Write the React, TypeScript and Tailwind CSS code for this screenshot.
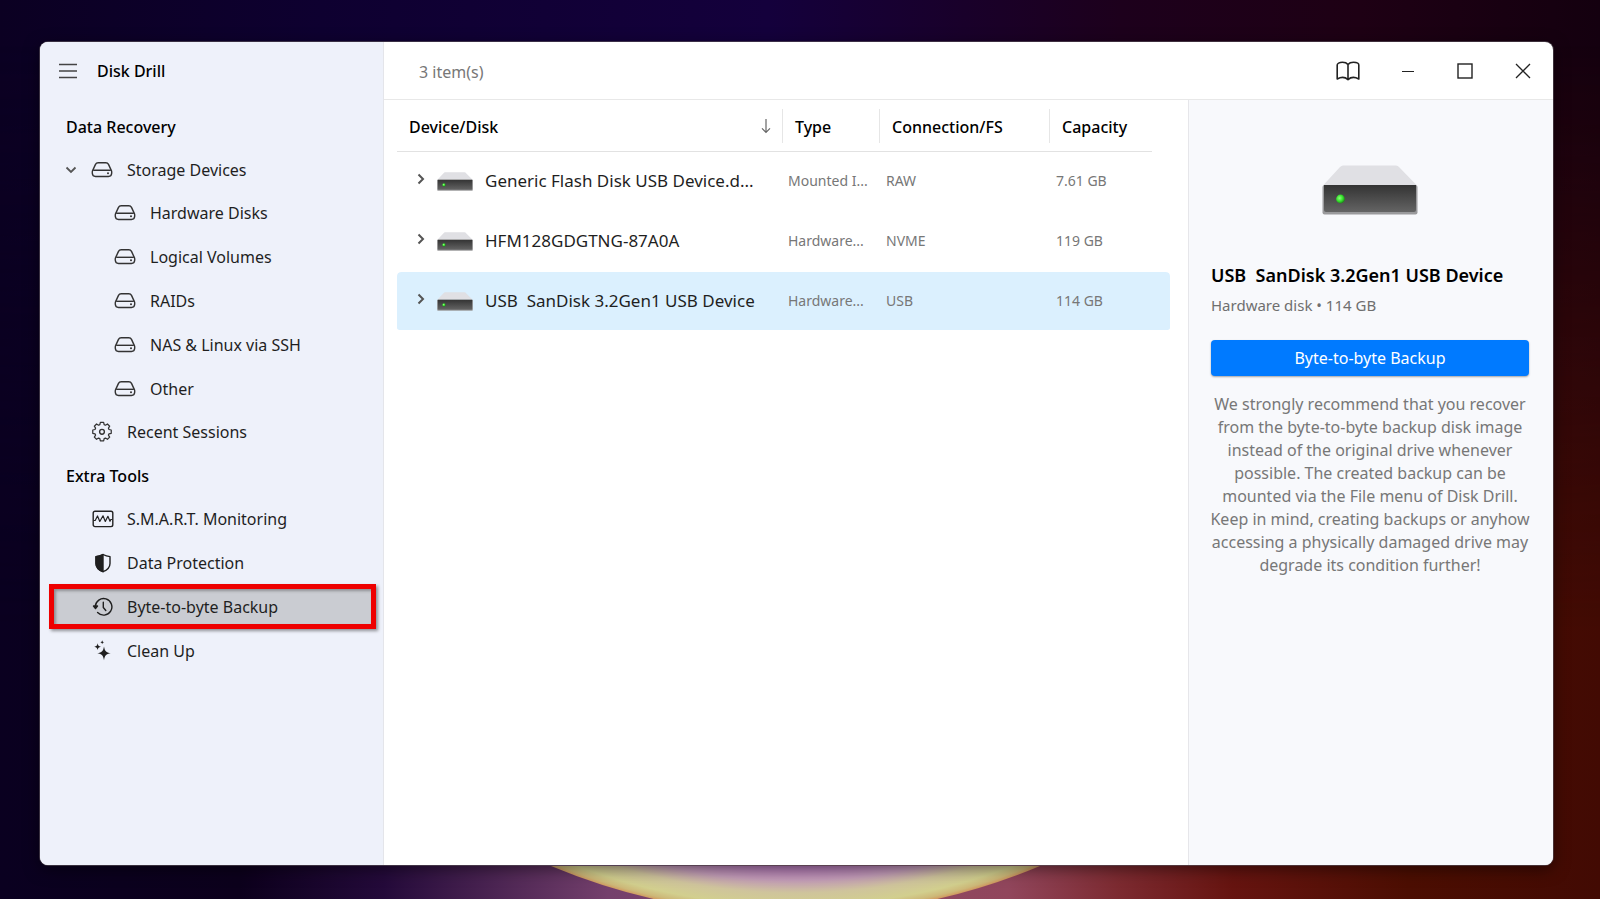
import { useState } from "react"
import type { ReactNode } from "react"

type IconProps = { className?: string }

const DriveIcon = ({ className = "" }: IconProps) => (
  <svg viewBox="0 0 22 18" className={`w-[22px] h-[18px] shrink-0 ${className}`} fill="none" stroke="#333" strokeWidth="1.4" strokeLinejoin="round">
    <path d="M7.2 1.7h7.6q1.9 0 2.7 1.7l2.9 6.2q.5 1.2.3 2.7-.3 3.2-3.2 3.2h-13q-2.9 0-3.2-3.2-.2-1.5.3-2.7l2.9-6.2Q5.3 1.7 7.2 1.7z" />
    <path d="M2.2 9.3h17.6" />
    <circle cx="17" cy="12.3" r="1" fill="#333" stroke="none" />
  </svg>
)

const GearIcon = () => (
  <svg viewBox="0 0 24 24" className="w-[22px] h-[22px] shrink-0" fill="none" stroke="#333" strokeWidth="1.5" strokeLinejoin="round">
    <path d="M10 2.8h4l.6 2.7 1.6.7 2.4-1.5 2.7 2.7-1.5 2.4.7 1.6 2.7.6v4l-2.7.6-.7 1.6 1.5 2.4-2.7 2.7-2.4-1.5-1.6.7-.6 2.7h-4l-.6-2.7-1.6-.7-2.4 1.5-2.7-2.7 1.5-2.4-.7-1.6L.8 16v-4l2.7-.6.7-1.6-1.5-2.4 2.7-2.7 2.4 1.5 1.6-.7z" transform="translate(1.2 -1) scale(0.9)" />
    <circle cx="12" cy="11.8" r="2.6" />
  </svg>
)

const PulseIcon = () => (
  <svg viewBox="0 0 22 18" className="w-[22px] h-[18px] shrink-0" fill="none" stroke="#222" strokeWidth="1.4" strokeLinejoin="round" strokeLinecap="round">
    <rect x="1.2" y="1.2" width="19.6" height="15.4" rx="1.8" />
    <path d="M2 10.5h1.2L5.5 6l2.3 5.5L11 5.800l2.300 5.700 2.600-5.200 2.100 5 .8-1.8h1.2" strokeWidth="1.2" />
  </svg>
)

const ShieldIcon = () => (
  <svg viewBox="0 0 22 20" className="w-[22px] h-5 shrink-0" fill="none" stroke="currentColor" strokeWidth="1.4" strokeLinejoin="round">
    <path d="M11 1.5C8.8 2.7 6.5 3.4 4 3.6v6.8c0 4 3 6.6 7 8.3 4-1.7 7-4.3 7-8.3V3.6c-2.5-.2-4.8-.9-7-2.1z" />
    <path d="M11 1.5C8.8 2.7 6.5 3.4 4 3.6v6.8c0 4 3 6.6 7 8.3z" fill="currentColor" />
  </svg>
)

const HistoryIcon = () => (
  <svg viewBox="0 0 22 20" className="w-[22px] h-5 shrink-0" fill="none" stroke="currentColor" strokeWidth="1.4" strokeLinecap="round" strokeLinejoin="round">
    <path d="M3.3 9.5A8.3 8.3 0 1 1 5.6 15.6" />
    <path d="M1.5 9h4l-2 2.6z" fill="currentColor" />
    <path d="M11.3 5.2v5.3l2.5 3" />
  </svg>
)

const SparkleIcon = () => (
  <svg viewBox="0 0 22 22" className="w-[22px] h-[22px] shrink-0" fill="currentColor">
    <path d="M12 6.5c.9 4.700 1.900 5.900 6.800 6.800-4.900.9-5.900 2.100-6.800 6.900-.9-4.800-1.900-6-6.800-6.900 4.900-.9 5.900-2.100 6.800-6.800z" />
    <path d="M5.600 3.300c.5 2.300 1 2.900 3.300 3.400-2.300.5-2.800 1-3.300 3.400-.5-2.400-1-2.900-3.300-3.400 2.300-.5 2.800-1.100 3.300-3.400z" />
    <path d="M10.200.2c.3 1.300.6 1.700 2 2-1.400.3-1.700.7-2 2.100-.3-1.400-.6-1.800-2-2.100 1.400-.3 1.700-.7 2-2z" />
  </svg>
)

const DiskImage = ({ className = "" }: IconProps) => (
  <svg viewBox="0 0 96 50" className={className} aria-hidden="true">
    <defs>
      <linearGradient id="disk-front" x1="0" y1="0" x2="0" y2="1">
        <stop offset="0" stopColor="#333333" />
        <stop offset="1" stopColor="#646464" />
      </linearGradient>
      <radialGradient id="disk-led" cx="0.4" cy="0.4" r="0.6">
        <stop offset="0" stopColor="#8dff7a" />
        <stop offset="0.6" stopColor="#35e02c" />
        <stop offset="1" stopColor="#1f8a1a" />
      </radialGradient>
    </defs>
    <path d="M21 0.5h53q2 0 3 1.5L95 20.5H1L18 2q1.5-1.5 3-1.5z" fill="#e0e0e4" />
    <rect x="0.5" y="20" width="95" height="29.5" rx="2" fill="#9a9a9c" />
    <path d="M2 20h92v25q0 2-2 2H4q-2 0-2-2z" fill="url(#disk-front)" />
    <circle cx="18.5" cy="34" r="4.4" fill="url(#disk-led)" />
  </svg>
)

const ChevronRight = () => (
  <svg viewBox="0 0 8 12" className="w-2 h-3 shrink-0" fill="none" stroke="#555" strokeWidth="2">
    <path d="M1.5 1.5 6 6l-4.5 4.5" />
  </svg>
)

type NavItem = { label: string; icon: ReactNode; open?: boolean; children?: string[] }

const recovery: NavItem[] = [
  {
    label: "Storage Devices",
    icon: <DriveIcon />,
    open: true,
    children: ["Hardware Disks", "Logical Volumes", "RAIDs", "NAS & Linux via SSH", "Other"],
  },
  { label: "Recent Sessions", icon: <GearIcon /> },
]

const tools: NavItem[] = [
  { label: "S.M.A.R.T. Monitoring", icon: <PulseIcon /> },
  { label: "Data Protection", icon: <ShieldIcon /> },
  { label: "Byte-to-byte Backup", icon: <HistoryIcon /> },
  { label: "Clean Up", icon: <SparkleIcon /> },
]

const devices = [
  { name: "Generic Flash Disk USB Device.d...", type: "Mounted I...", fs: "RAW", capacity: "7.61 GB" },
  { name: "HFM128GDGTNG-87A0A", type: "Hardware...", fs: "NVME", capacity: "119 GB" },
  { name: "USB  SanDisk 3.2Gen1 USB Device", type: "Hardware...", fs: "USB", capacity: "114 GB" },
]

function Sidebar() {
  const [active, setActive] = useState("Byte-to-byte Backup")

  return (
    <aside className="w-[344px] shrink-0 bg-[#eef1fa] border-r border-[#e4e5ea]">
      <div className="flex items-center gap-[19px] h-[57px] pl-[18px]">
        <button aria-label="Menu" className="text-[#444]">
          <svg viewBox="0 0 20 16" className="w-5 h-4" stroke="currentColor" strokeWidth="1.3">
            <path d="M1 1.5h18M1 8h18M1 14.5h18" />
          </svg>
        </button>
        <h1 className="font-medium text-black">Disk Drill</h1>
      </div>

      <nav className="pt-[6px]">
        <h2 className="flex items-center h-[43px] pl-[26px] font-medium text-black">Data Recovery</h2>
        <ul>
          {recovery.map((item) => (
            <li key={item.label}>
              <a href="#" className="flex items-center h-[43px] pl-[25px]">
                <span className="w-[26px] shrink-0">
                  {item.open && (
                    <svg viewBox="0 0 12 8" className="w-3 h-2" fill="none" stroke="#555" strokeWidth="1.8">
                      <path d="M1.5 1.5 6 6l4.5-4.5" />
                    </svg>
                  )}
                </span>
                {item.icon}
                <span className="pl-[14px]">{item.label}</span>
              </a>
              {item.children && (
                <ul className="flex flex-col gap-px">
                  {item.children.map((child) => (
                    <li key={child}>
                      <a href="#" className="flex items-center h-[43px] pl-[74px]">
                        <DriveIcon />
                        <span className="pl-[14px]">{child}</span>
                      </a>
                    </li>
                  ))}
                </ul>
              )}
            </li>
          ))}
        </ul>

        <h2 className="flex items-center h-[42px] mt-[2px] pl-[26px] font-medium text-black">Extra Tools</h2>
        <ul className="flex flex-col gap-px">
          {tools.map((item) => (
            <li key={item.label} className="flex items-center h-[43px] pl-[9px] pr-[7px]">
              <a
                href="#"
                onClick={() => setActive(item.label)}
                className={
                  item.label === active
                    ? "flex flex-1 items-center h-[45px] shrink-0 pl-[38px] border-5 border-[#ee0000] bg-[#caccd2] shadow-[2px_2px_3px_rgba(0,0,0,0.4),inset_2px_2px_3px_rgba(0,0,0,0.3)]"
                    : "flex flex-1 items-center h-[43px] pl-[43px]"
                }
              >
                {item.icon}
                <span className="pl-[13px]">{item.label}</span>
              </a>
            </li>
          ))}
        </ul>
      </nav>
    </aside>
  )
}

function DeviceTable() {
  const [selected, setSelected] = useState(2)

  return (
    <table className="w-full table-fixed border-separate border-spacing-0 text-left">
      <colgroup>
        <col />
        <col className="w-[97px]" />
        <col className="w-[170px]" />
        <col className="w-[120px]" />
      </colgroup>
      <thead>
        <tr className="text-black">
          <th className="p-0 font-medium">
            <div className="flex items-center h-[52px] border-b border-[#e2e2e2]">
              <div className="flex items-center justify-between w-full h-[34px] pl-3 pr-[11px] pt-[2px] border-r border-[#e6e6e6]">
                Device/Disk
                <svg viewBox="0 0 10 16" className="w-[10px] h-4" fill="none" stroke="#666" strokeWidth="1.2">
                  <path d="M5 0v13M1 9.3l4 4 4-4" />
                </svg>
              </div>
            </div>
          </th>
          <th className="p-0 font-medium">
            <div className="flex items-center h-[52px] border-b border-[#e2e2e2]">
              <div className="flex items-center w-full h-[34px] pl-3 pt-[2px] border-r border-[#e6e6e6]">Type</div>
            </div>
          </th>
          <th className="p-0 font-medium">
            <div className="flex items-center h-[52px] border-b border-[#e2e2e2]">
              <div className="flex items-center w-full h-[34px] pl-3 pt-[2px] border-r border-[#e6e6e6]">Connection/FS</div>
            </div>
          </th>
          <th className="p-0 font-medium">
            <div className="flex items-center h-[52px] pl-3 pt-[2px] mr-[18px] border-b border-[#e2e2e2]">Capacity</div>
          </th>
        </tr>
      </thead>
      <tbody>
        {devices.map((device, i) => {
          const bg = i === selected ? "bg-[#dbf0fe]" : ""
          return (
            <tr key={device.name} onClick={() => setSelected(i)} className="h-[60px] text-sm text-[#777]">
              <td className={`p-0 border-b-2 border-transparent bg-clip-padding rounded-l ${bg}`}>
                <div className="flex items-center pl-5">
                  <button aria-label="Expand" className="pb-1">
                    <ChevronRight />
                  </button>
                  <DiskImage className="w-9 h-[19px] ml-3 shrink-0" />
                  <span className="pl-3 text-[17px] leading-7 text-[#1f1f1f] whitespace-pre">{device.name}</span>
                </div>
              </td>
              <td className={`py-0 pl-[5px] whitespace-nowrap border-b-2 border-transparent bg-clip-padding ${bg}`}>{device.type}</td>
              <td className={`py-0 pl-[6px] border-b-2 border-transparent bg-clip-padding ${bg}`}>{device.fs}</td>
              <td className={`py-0 pl-[6px] border-b-2 border-transparent bg-clip-padding rounded-r ${bg}`}>{device.capacity}</td>
            </tr>
          )
        })}
      </tbody>
    </table>
  )
}

function Details() {
  return (
    <aside className="w-[365px] shrink-0 bg-[#f8f9fc] border-l border-[#e6e6ea] pl-[22px] pr-6 pt-[65px]">
      <DiskImage className="w-24 h-[50px] mx-auto" />
      <h2 className="mt-[46px] text-lg leading-7 font-semibold text-black whitespace-pre">USB  SanDisk 3.2Gen1 USB Device</h2>
      <p className="mt-1 text-[15px] leading-6 text-[#6f6f6f]">Hardware disk • 114 GB</p>
      <button className="mt-[23px] w-full h-9 rounded bg-[#007aff] text-white shadow-[0_1px_2px_rgba(0,0,0,0.35)]">
        Byte-to-byte Backup
      </button>
      <p className="mt-[17px] -mx-1 leading-[23px] text-center text-[#777]">
        We strongly recommend that you recover from the byte-to-byte backup disk image instead of the original drive
        whenever possible. The created backup can be mounted via the File menu of Disk Drill. Keep in mind, creating
        backups or anyhow accessing a physically damaged drive may degrade its condition further!
      </p>
    </aside>
  )
}

function Wallpaper() {
  return (
    <svg className="absolute inset-0 w-full h-full" viewBox="0 0 1600 899" preserveAspectRatio="xMidYMax slice" aria-hidden="true">
      <defs>
        <linearGradient id="sky">
          <stop offset="0" stopColor="#0b0022" />
          <stop offset="0.2" stopColor="#0e0030" />
          <stop offset="0.48" stopColor="#14003c" />
          <stop offset="0.7" stopColor="#1d001c" />
          <stop offset="0.85" stopColor="#1e0014" />
          <stop offset="1" stopColor="#14000f" />
        </linearGradient>
        <linearGradient id="ground">
          <stop offset="0" stopColor="#0a0020" />
          <stop offset="0.15" stopColor="#0c001c" />
          <stop offset="0.24" stopColor="#240a3a" />
          <stop offset="0.38" stopColor="#74406c" />
          <stop offset="0.5" stopColor="#8a4868" />
          <stop offset="0.63" stopColor="#91465c" />
          <stop offset="0.7" stopColor="#7c2a30" />
          <stop offset="0.77" stopColor="#661410" />
          <stop offset="0.88" stopColor="#4c0e02" />
          <stop offset="1" stopColor="#420a03" />
        </linearGradient>
        <linearGradient id="fade" x1="0" y1="0" x2="0" y2="1">
          <stop offset="0.05" stopColor="#fff" stopOpacity="0" />
          <stop offset="0.7" stopColor="#fff" />
        </linearGradient>
        <mask id="ground-mask">
          <rect width="1600" height="899" fill="url(#fade)" />
        </mask>
        <radialGradient id="orb" gradientUnits="userSpaceOnUse" cx="795" cy="282" r="633">
          <stop offset="0.92" stopColor="#b274b8" />
          <stop offset="0.945" stopColor="#c39cb8" />
          <stop offset="0.965" stopColor="#cfc49c" />
          <stop offset="0.985" stopColor="#d2cf8e" />
          <stop offset="0.995" stopColor="#cdb878" />
          <stop offset="1" stopColor="#d09a60" />
        </radialGradient>
      </defs>
      <rect width="1600" height="899" fill="url(#sky)" />
      <rect width="1600" height="899" fill="url(#ground)" mask="url(#ground-mask)" />
      <path d="M551 866A633 633 0 0 0 1040 866z" fill="url(#orb)" />
    </svg>
  )
}

export default function App() {
  return (
    <div className="relative flex min-h-screen pt-[42px] pr-[47px] pb-[34px] pl-10 bg-[#0b0022] font-['Noto_Sans',sans-serif] text-base text-[#1f1f1f]">
      <Wallpaper />
      <div className="relative flex flex-1 min-w-0 overflow-hidden rounded-lg bg-white shadow-[0_0_0_1px_rgba(90,80,90,0.6),0_4px_16px_rgba(0,0,0,0.5)]">
        <Sidebar />
        <div className="flex flex-col flex-1 min-w-0">
          <header className="flex items-center justify-between h-[58px] shrink-0 pl-[35px] pr-[22px] border-b border-[#e8e8e8]">
            <p className="pt-[2px] text-[#777]">3 item(s)</p>
            <div className="flex items-center text-[#222]">
              <button aria-label="Help" className="mr-[41px]">
                <svg viewBox="0 0 24 20" className="w-6 h-5" fill="none" stroke="currentColor" strokeWidth="1.6" strokeLinejoin="round">
                  <path d="M12 3.5C10.5 1.7 8.5 1.3 6.5 1.3c-3.3 0-5.3 1.2-5.3 2.7v14c3.5-1.9 8-1.9 10.8.6 2.8-2.5 7.3-2.5 10.8-.6V4c0-1.5-2-2.7-5.3-2.7-2 0-4 .4-5.5 2.200zM12 3.5v14.800" />
                </svg>
              </button>
              <button aria-label="Minimize" className="mr-[42px]">
                <svg viewBox="0 0 14 16" className="w-[14px] h-4" stroke="currentColor">
                  <path d="M1 8.5h12" />
                </svg>
              </button>
              <button aria-label="Maximize" className="mr-[42px]">
                <svg viewBox="0 0 16 16" className="w-4 h-4" fill="none" stroke="currentColor" strokeWidth="1.4">
                  <rect x="1" y="1" width="14" height="14" />
                </svg>
              </button>
              <button aria-label="Close">
                <svg viewBox="0 0 16 16" className="w-4 h-4" stroke="currentColor" strokeWidth="1.3">
                  <path d="M1 1l14 14M15 1 1 15" />
                </svg>
              </button>
            </div>
          </header>
          <div className="flex flex-1">
            <main className="flex-1 min-w-0 pl-[13px] pr-[18px]">
              <DeviceTable />
            </main>
            <Details />
          </div>
        </div>
      </div>
    </div>
  )
}
